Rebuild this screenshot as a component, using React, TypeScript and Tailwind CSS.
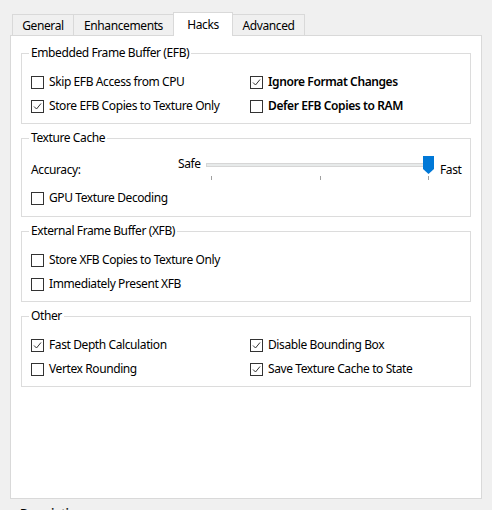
import React from 'react';

const font = { fontFamily: '"Noto Sans", "Open Sans", sans-serif' };

function Check({ checked }: { checked?: boolean }) {
  return (
    <span className="w-[13px] h-[13px] border border-[#333333] bg-white shrink-0 flex items-center justify-center">
      {checked && (
        <svg width="11" height="11" viewBox="0 0 11 11">
          <polyline points="2,5.5 4.5,8 9,2.5" fill="none" stroke="#333333" strokeWidth="1" />
        </svg>
      )}
    </span>
  );
}

function Row({ label, checked, bold }: { label: string; checked?: boolean; bold?: boolean }) {
  return (
    <div className="h-[24px] flex items-center gap-[5px]">
      <Check checked={checked} />
      <span className={bold ? 'font-semibold' : ''}>{label}</span>
    </div>
  );
}

function Group({ title, children, className = '' }: { title: string; children: React.ReactNode; className?: string }) {
  return (
    <fieldset className={`border border-[#dcdcdc] px-[9px] pt-[9px] pb-[5px] ${className}`}>
      <legend className="-ml-[2px] px-[2px] leading-[16px]">{title}</legend>
      {children}
    </fieldset>
  );
}

export default function App() {
  const tabs = [
    { name: 'General', w: 'w-[62px]' },
    { name: 'Enhancements', w: 'w-[101px]' },
    { name: 'Hacks', w: 'w-[60px]', active: true },
    { name: 'Advanced', w: 'w-[73px]' },
  ];

  return (
    <div className="w-[492px] h-[510px] overflow-hidden bg-[#f0f0f0] text-[12px] tracking-[-0.4px] text-black" style={font}>
      {/* tab strip */}
      <div className="pt-[12px] pl-[12px] h-[35px] flex items-end">
        {tabs.map((t) =>
          t.active ? (
            <div
              key={t.name}
              className={`${t.w} h-[24px] -mb-px -ml-px relative z-10 bg-white border border-b-0 border-[#d9d9d9] flex items-center justify-center`}
            >
              {t.name}
            </div>
          ) : (
            <div
              key={t.name}
              className={`${t.w} h-[21px] -ml-px first:ml-0 bg-[#f0f0f0] border border-b-0 border-[#d9d9d9] flex items-center justify-center pt-[1px]`}
            >
              {t.name}
            </div>
          )
        )}
      </div>

      {/* tab pane */}
      <div className="mx-[10px] w-[472px] h-[464px] bg-white border border-[#d9d9d9] px-[10px] pt-[9px] flex flex-col gap-[6px]">
        <Group title="Embedded Frame Buffer (EFB)">
          <div className="grid grid-cols-[219px_1fr]">
            <Row label="Skip EFB Access from CPU" />
            <Row label="Ignore Format Changes" checked bold />
            <Row label="Store EFB Copies to Texture Only" checked />
            <Row label="Defer EFB Copies to RAM" bold />
          </div>
        </Group>

        <Group title="Texture Cache" className="!pt-0 !pb-[6px]">
          <div className="h-[40px] flex items-start">
            <div className="w-[147px] mt-[16px] leading-[16px]">Accuracy:</div>
            <div className="w-[28px] mt-[10px] leading-[16px]">Safe</div>
            <div className="relative w-[228px] h-[40px]">
              <div className="absolute left-0 right-0 top-[17px] h-[4px] bg-[#e7eaea] border border-[#d6d6d6]" />
              <div className="absolute left-[5px] top-[30px] w-px h-[4px] bg-[#a0a0a0]" />
              <div className="absolute left-[114px] top-[30px] w-px h-[4px] bg-[#a0a0a0]" />
              <div className="absolute left-[222px] top-[30px] w-px h-[4px] bg-[#a0a0a0]" />
              <svg className="absolute left-[217px] top-[10px]" width="11" height="18" viewBox="0 0 11 18">
                <path d="M0 0 H11 V13 L5.5 18 L0 13 Z" fill="#0078d7" />
              </svg>
            </div>
            <div className="ml-[6px] mt-[16px] leading-[16px]">Fast</div>
          </div>
          <Row label="GPU Texture Decoding" />
        </Group>

        <Group title="External Frame Buffer (XFB)">
          <Row label="Store XFB Copies to Texture Only" />
          <Row label="Immediately Present XFB" />
        </Group>

        <Group title="Other">
          <div className="grid grid-cols-[219px_1fr]">
            <Row label="Fast Depth Calculation" checked />
            <Row label="Disable Bounding Box" checked />
            <Row label="Vertex Rounding" />
            <Row label="Save Texture Cache to State" checked />
          </div>
        </Group>
      </div>

      <div className="ml-[20px] mt-[7px] leading-[16px] font-semibold">Description</div>
    </div>
  );
}
